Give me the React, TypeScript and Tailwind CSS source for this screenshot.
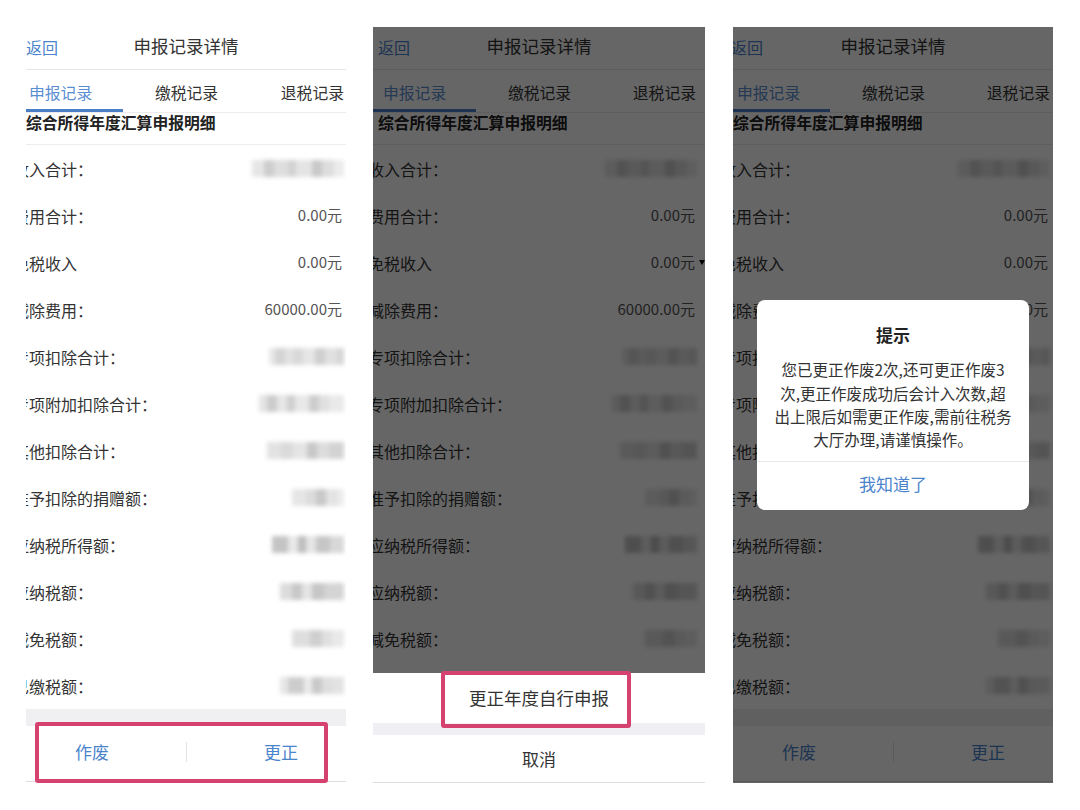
import React from "react";

type Seg = [number, string];
type Row = { label: string; value?: string; blur?: Seg[] };

const rows: Row[] = [
  {
    label: "收入合计：",
    blur: [[12, "#e6e6e6"], [10, "#cdcdcd"], [14, "#dedede"], [8, "#d2d2d2"], [16, "#e4e4e4"], [10, "#c9c9c9"], [12, "#dddddd"], [10, "#ececec"]],
  },
  { label: "费用合计：", value: "0.00元" },
  { label: "免税收入", value: "0.00元" },
  { label: "减除费用：", value: "60000.00元" },
  {
    label: "专项扣除合计：",
    blur: [[6, "#e8e8e8"], [10, "#d4d4d4"], [8, "#e2e2e2"], [10, "#d9d9d9"], [12, "#e6e6e6"], [10, "#cfcfcf"], [12, "#e0e0e0"], [7, "#d6d6d6"]],
  },
  {
    label: "专项附加扣除合计：",
    blur: [[8, "#e4e4e4"], [10, "#cccccc"], [10, "#e6e6e6"], [8, "#cfcfcf"], [14, "#e8e8e8"], [10, "#cdcdcd"], [10, "#e0e0e0"], [15, "#e9e9e9"]],
  },
  {
    label: "其他扣除合计：",
    blur: [[14, "#e2e2e2"], [12, "#dadada"], [14, "#e5e5e5"], [10, "#c8c8c8"], [12, "#dcdcdc"], [15, "#d3d3d3"]],
  },
  {
    label: "准予扣除的捐赠额：",
    blur: [[14, "#e6e6e6"], [10, "#dcdcdc"], [10, "#c9c9c9"], [12, "#e3e3e3"], [6, "#ececec"]],
  },
  {
    label: "应纳税所得额：",
    blur: [[16, "#c4c4c4"], [10, "#e8e8e8"], [8, "#bdbdbd"], [10, "#e5e5e5"], [14, "#c6c6c6"], [14, "#d8d8d8"]],
  },
  {
    label: "应纳税额：",
    blur: [[12, "#dcdcdc"], [10, "#c8c8c8"], [10, "#e4e4e4"], [12, "#c6c6c6"], [20, "#d4d4d4"]],
  },
  {
    label: "减免税额：",
    blur: [[18, "#dedede"], [12, "#cfcfcf"], [10, "#e0e0e0"], [12, "#e9e9e9"]],
  },
  {
    label: "已缴税额：",
    blur: [[8, "#e6e6e6"], [16, "#cdcdcd"], [8, "#eaeaea"], [10, "#c9c9c9"], [10, "#dedede"], [12, "#e2e2e2"]],
  },
];

function Blur({ segs }: { segs: Seg[] }) {
  return (
    <div className="-mr-[2px] flex h-[17px] blur-[2px]">
      {segs.map(([w, c], i) => (
        <span key={i} style={{ width: w, background: c }} />
      ))}
    </div>
  );
}

type ScreenProps = {
  w: string;
  back: string;
  tabs: string;
  line: string;
  title: string;
  label: string;
  pr: string;
  caret?: boolean;
  children?: React.ReactNode;
};

function Screen({ w, back, tabs, line, title, label, pr, caret, children }: ScreenProps) {
  return (
    <div className={`relative h-[756px] shrink-0 overflow-hidden bg-white ${w}`}>
      {/* header */}
      <div className="grid h-[43px] grid-cols-[1fr_auto_1fr] items-center border-b border-[#e6e6e6] pb-[3px]">
        <span className={`text-[16px] text-[#4a84cc] ${back}`}>返回</span>
        <span className="text-[17.5px] text-[#333]">申报记录详情</span>
        <span />
      </div>

      {/* tabs */}
      <div className={`relative flex h-[43px] items-center justify-between border-b border-[#ececec] pt-[3px] text-[15.8px] text-[#333] ${tabs}`}>
        <span className="text-[#5a8ed2]">申报记录</span>
        <span>缴税记录</span>
        <span>退税记录</span>
        <span className={`absolute bottom-0 left-0 h-[3px] bg-[#4a7fc8] ${line}`} />
      </div>

      <div className={`h-[32px] border-b border-[#eeeeee] text-[15.8px] font-bold leading-[20px] text-[#222] ${title}`}>
        综合所得年度汇算申报明细
      </div>

      {rows.map((r) => (
        <div key={r.label} className={`flex h-[47px] items-center justify-between ${pr}`}>
          <span className={`whitespace-nowrap text-[16px] text-[#333] ${label}`}>{r.label}</span>
          {r.value ? (
            <span className="flex items-center text-[15px] text-[#555]">
              {r.value}
              {caret && r.label === "免税收入" && (
                <span className="-mr-[10px] ml-[4px] h-0 w-0 border-x-[3px] border-t-[5px] border-x-transparent border-t-black" />
              )}
            </span>
          ) : (
            r.blur && <Blur segs={r.blur} />
          )}
        </div>
      ))}

      <div className="h-[17px] bg-[#f0f0f2]" />
      <div className="flex h-[56px] items-center border-b border-[#dddddd] pb-[4px] text-[17px] text-[#4a84cc]">
        <div className="w-[160px] pl-[49px]">作废</div>
        <div className="h-[20px] w-px bg-[#e3e3e3]" />
        <div className="flex-1 pl-[77px]">更正</div>
      </div>

      {children}
    </div>
  );
}

export default function App() {
  return (
    <div className="flex h-[810px] w-[1080px] bg-white pt-[27px] font-['Noto_Sans_CJK_SC','Noto_Sans',sans-serif]">
      <div className="ml-[26px]">
        <Screen w="w-[320px]" back="" tabs="pl-[3px] pr-[2px]" line="w-[97px]" title="" label="-ml-[13px]" pr="pr-[4px]">
          <div className="absolute left-[9px] top-[695px] h-[61px] w-[293px] rounded-[3px] border-[4px] border-[#d6426f]" />
        </Screen>
      </div>

      <div className="ml-[27px]">
        <Screen
          w="w-[332px]"
          back="pl-[5px]"
          tabs="pl-[10px] pr-[9px]"
          line="w-[103px]"
          title="pl-[5px]"
          label="-ml-[5px]"
          pr="pr-[10px]"
          caret
        >
          <div className="absolute inset-0 bg-black/60" />
          <div className="absolute inset-x-0 bottom-0 bg-white text-[#333]">
            <div className="flex h-[50px] items-center justify-center text-[17.5px]">更正年度自行申报</div>
            <div className="h-[12px] bg-[#efeff4]" />
            <div className="flex h-[48px] items-center justify-center border-b border-[#dddddd] text-[17px]">取消</div>
          </div>
          <div className="absolute left-[68px] top-[644px] h-[57px] w-[190px] rounded-[3px] border-[4px] border-[#d6426f]" />
        </Screen>
      </div>

      <div className="ml-[28px]">
        <Screen w="w-[320px]" back="-ml-[2px]" tabs="pl-[4px] pr-[3px]" line="w-[97px]" title="" label="-ml-[13px]" pr="pr-[5px]">
          <div className="absolute inset-0 flex items-center justify-center bg-black/60">
            <div className="w-[272px] overflow-hidden rounded-[8px] bg-white">
              <div className="px-[12px] pb-[9px] pt-[24px] text-center">
                <div className="text-[17px] font-bold leading-[22px] text-[#222]">提示</div>
                <div className="mt-[12px] whitespace-nowrap text-[15.5px] leading-[23.3px] text-[#333]">
                  您已更正作废2次,还可更正作废3
                  <br />
                  次,更正作废成功后会计入次数,超
                  <br />
                  出上限后如需更正作废,需前往税务
                  <br />
                  大厅办理,请谨慎操作。
                </div>
              </div>
              <div className="flex h-[49px] items-center justify-center border-t border-[#e8e8e8] pb-[4px] text-[17px] text-[#4a84cc]">
                我知道了
              </div>
            </div>
          </div>
        </Screen>
      </div>
    </div>
  );
}
